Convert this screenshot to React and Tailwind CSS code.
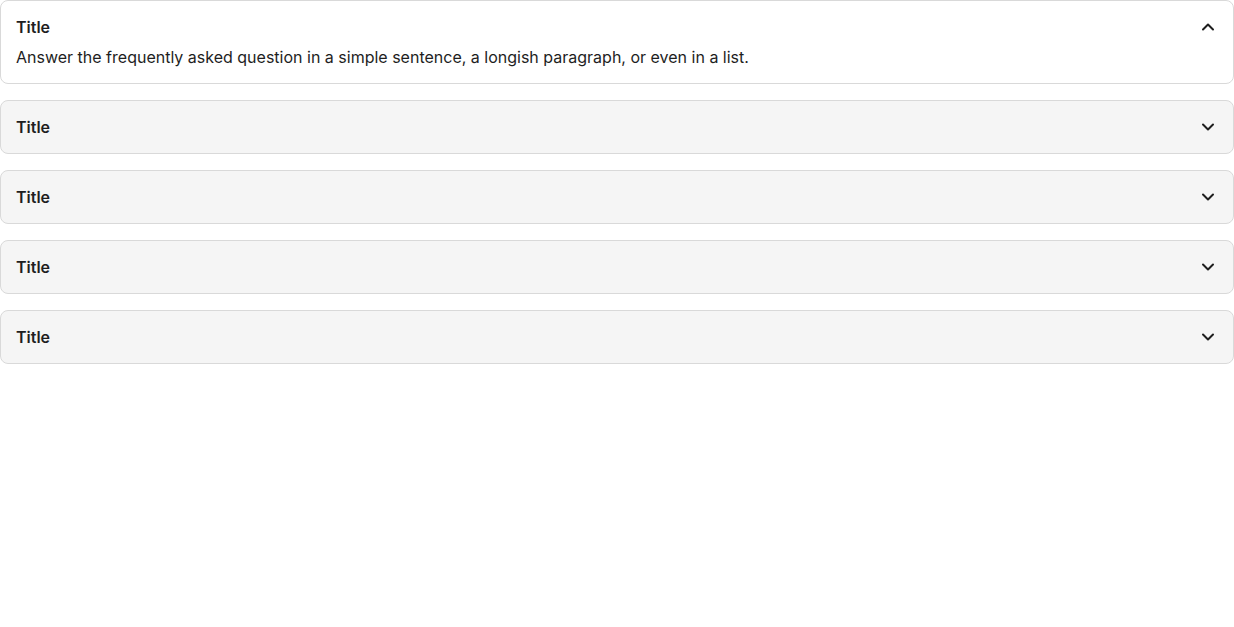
import { ChevronDown, ChevronUp } from 'lucide-react';

const items = [
    { title: 'Title', open: true, body: 'Answer the frequently asked question in a simple sentence, a longish paragraph, or even in a list.' },
    { title: 'Title', open: false },
    { title: 'Title', open: false },
    { title: 'Title', open: false },
    { title: 'Title', open: false },
];

const App = () => {
    return (
        <div className="flex flex-col gap-4 text-[#1e1e1e]" style={{ fontFamily: 'Inter, "Noto Sans", sans-serif' }}>
            {items.map((item, i) => (
                <div
                    key={i}
                    className={`rounded-lg border border-[#d9d9d9] px-[15px] ${item.open ? 'bg-white pt-4 pb-[15px]' : 'bg-[#f5f5f5] py-4'}`}
                >
                    <div className="flex items-center justify-between gap-2 h-5">
                        <span className="text-base font-semibold leading-5">{item.title}</span>
                        {item.open ? (
                            <ChevronUp className="w-5 h-5 shrink-0" strokeWidth={2.4} />
                        ) : (
                            <ChevronDown className="w-5 h-5 shrink-0" strokeWidth={2.4} />
                        )}
                    </div>
                    {item.open && (
                        <p className="mt-[9px] text-base leading-[22px]">{item.body}</p>
                    )}
                </div>
            ))}
        </div>
    );
};

export default App;
